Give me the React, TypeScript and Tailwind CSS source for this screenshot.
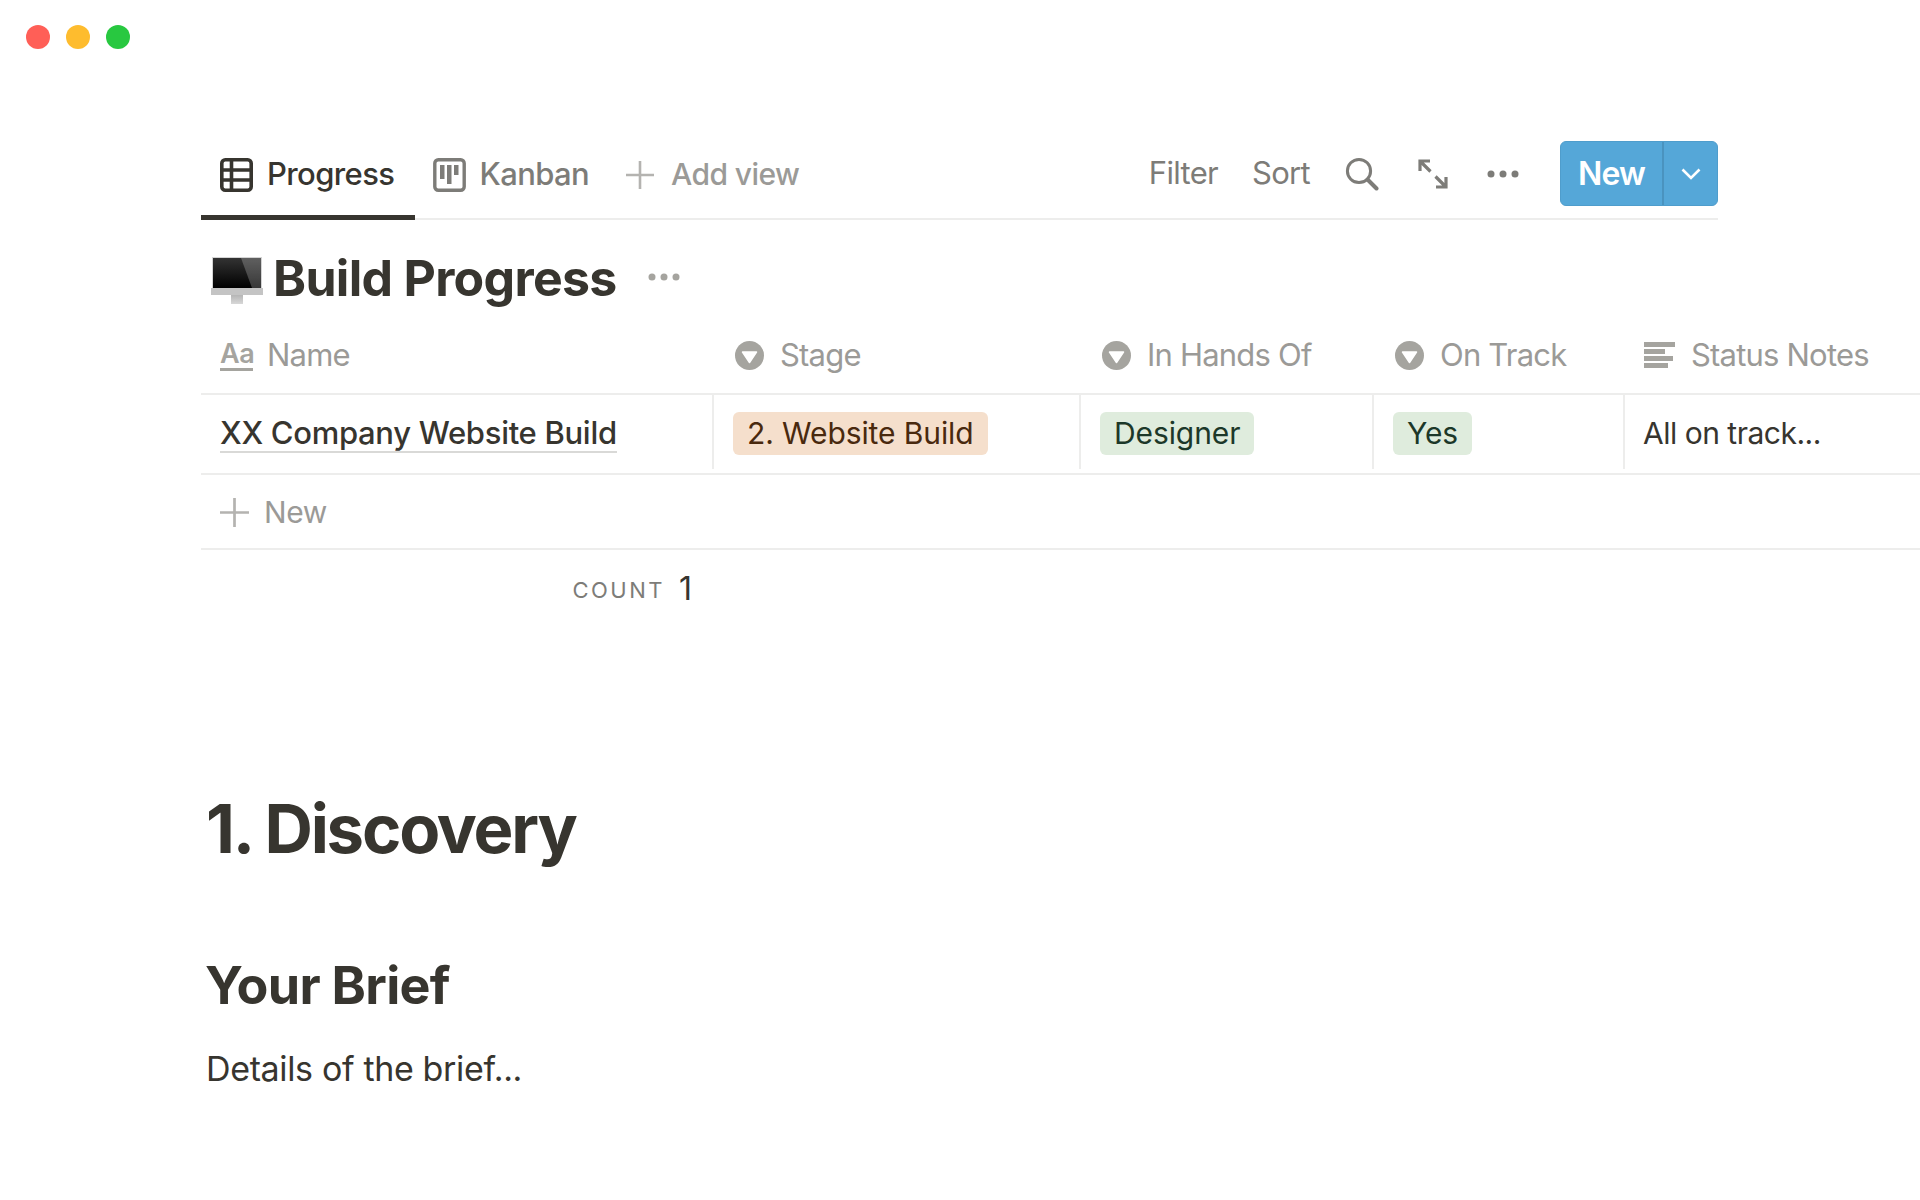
const font = "font-['Inter','Liberation_Sans',sans-serif]"

function TableIcon() {
    return <svg width="33" height="34" viewBox="0 0 33 34" fill="none" stroke="#37352f" strokeWidth="3.6">
        <rect x="1.8" y="1.8" width="29.4" height="30.4" rx="3.5"/>
        <path d="M1.8 12H31.2M1.8 22H31.2M11.5 2V32"/>
    </svg>
}

function KanbanIcon() {
    return <svg width="33" height="34" viewBox="0 0 33 34" fill="none">
        <rect x="1.8" y="1.8" width="29.4" height="30.4" rx="3.5" stroke="#7d7c78" strokeWidth="3.4"/>
        <rect x="7" y="7" width="4.5" height="14" fill="#7d7c78"/>
        <rect x="14" y="7" width="4.5" height="19" fill="#7d7c78"/>
        <rect x="21" y="7" width="4.5" height="10" fill="#7d7c78"/>
    </svg>
}

function Plus({size, color}: {size: number, color: string}) {
    return <svg width={size} height={size} viewBox="0 0 28 28" stroke={color} strokeWidth="2.6" fill="none">
        <path d="M14 0V28M0 14H28"/>
    </svg>
}

function Dots({color}: {color: string}) {
    return <svg width="32" height="8" viewBox="0 0 32 8" fill={color}>
        <circle cx="4" cy="4" r="3.5"/>
        <circle cx="16" cy="4" r="3.5"/>
        <circle cx="28" cy="4" r="3.5"/>
    </svg>
}

function SearchIcon() {
    return <svg width="34" height="34" viewBox="0 0 34 34" fill="none" stroke="#7d7c78" strokeLinecap="round">
        <circle cx="14" cy="14" r="11.6" strokeWidth="3"/>
        <path d="M22.5 22.5L31.5 31.5" strokeWidth="4"/>
    </svg>
}

function ExpandIcon() {
    return <svg width="30" height="30" viewBox="0 0 30 30" fill="none" stroke="#7d7c78" strokeWidth="3.2">
        <path d="M2 12V2H12M2 2L12.5 12.5"/>
        <path d="M28 18V28H18M28 28L17.5 17.5"/>
    </svg>
}

function SelectIcon() {
    return <svg width="29" height="29" viewBox="0 0 29 29" className="shrink-0">
        <circle cx="14.5" cy="14.5" r="14.5" fill="#a5a49f"/>
        <path d="M7.5 11H21.5L14.5 21.5Z" fill="#fff" stroke="#fff" strokeWidth="1.5" strokeLinejoin="round"/>
    </svg>
}

function NotesIcon() {
    return <div className="flex w-[31px] shrink-0 flex-col gap-[2px]">
        <div className="h-[5px] w-[31px] bg-[#a5a49f]"/>
        <div className="h-[5px] w-[21px] bg-[#a5a49f]"/>
        <div className="h-[5px] w-[29px] bg-[#a5a49f]"/>
        <div className="h-[5px] w-[24px] bg-[#a5a49f]"/>
    </div>
}

function MonitorIcon() {
    return <svg width="52" height="48" viewBox="0 0 52 48" className="mt-[5px] shrink-0">
        <defs>
            <linearGradient id="screen" x1="0" y1="0" x2="0" y2="1">
                <stop offset="0" stopColor="#333"/>
                <stop offset="1" stopColor="#000"/>
            </linearGradient>
            <linearGradient id="stand" x1="0" y1="0" x2="0" y2="1">
                <stop offset="0" stopColor="#b5b5b5"/>
                <stop offset="1" stopColor="#d8d8d8"/>
            </linearGradient>
        </defs>
        <rect x="1" y="0" width="50" height="31" fill="#d4d4d4"/>
        <rect x="2" y="1" width="48" height="30" fill="url(#screen)"/>
        <path d="M30 1H50V31H41Z" fill="#fff" opacity="0.22"/>
        <rect x="0" y="31" width="52" height="7" fill="#c4c4c4"/>
        <rect x="20" y="38" width="12" height="9" fill="url(#stand)"/>
    </svg>
}

function Pill({label, bg, color}: {label: string, bg: string, color: string}) {
    return <span className={`flex h-[43px] items-center rounded-[6px] px-[14px] text-[30px] tracking-[-0.1px] ${bg} ${color}`}>{label}</span>
}

function HeaderCell({icon, label, inset}: {icon: React.ReactNode, label: string, inset: string}) {
    return <div className={`flex items-center ${inset}`}>
        {icon}
        <span className="text-[31px] tracking-[-0.8px] text-[#9b9a97]">{label}</span>
    </div>
}

export default function App() {
    return <div className={`h-[1200px] w-[1920px] overflow-hidden bg-white text-[#37352f] ${font}`}>
        <div className="flex h-[74px] items-center gap-4 pl-[26px]">
            <div className="size-6 rounded-full bg-[#ff5f57]"/>
            <div className="size-6 rounded-full bg-[#febc2e]"/>
            <div className="size-6 rounded-full bg-[#28c840]"/>
        </div>

        <div className="pl-[201px]">
            <div className="mt-[66px] flex h-[80px] w-[1517px] border-b-2 border-[#ededec]">
                <div className="flex h-[80px] items-center gap-[14px] border-b-[5px] border-[#37352f] pb-[7px] pl-[19px] pr-[21px] pt-px">
                    <TableIcon/>
                    <span className="text-[31px] font-medium tracking-[-0.6px]">Progress</span>
                </div>
                <div className="ml-[18px] flex h-[68px] items-center gap-[13px] pt-px text-[#7d7c78]">
                    <KanbanIcon/>
                    <span className="text-[31px] font-medium tracking-[-0.6px]">Kanban</span>
                </div>
                <div className="ml-[37px] flex h-[68px] items-center gap-[17px] pt-px text-[#9b9a97]">
                    <Plus size={28} color="#b4b3b0"/>
                    <span className="text-[30px] font-medium tracking-[-0.6px]">Add view</span>
                </div>

                <div className="ml-auto flex h-[66px] items-center pt-px text-[#7d7c78]">
                    <span className="text-[31px] tracking-[-0.7px]">Filter</span>
                    <span className="ml-[34px] text-[31px] tracking-[-0.7px]">Sort</span>
                    <div className="ml-[35px]"><SearchIcon/></div>
                    <div className="ml-[39px]"><ExpandIcon/></div>
                    <div className="ml-[39px]"><Dots color="#7d7c78"/></div>
                    <div className="ml-[41px] flex h-[65px] w-[158px] rounded-[6px] border border-[#4f9dcc] bg-[#55a7d8] text-white">
                        <div className="flex w-[103px] items-center justify-center border-r-2 border-[#4a93bf] text-[32px] font-semibold tracking-[-0.9px]">New</div>
                        <div className="flex flex-1 items-center justify-center">
                            <svg width="20" height="12" viewBox="0 0 20 12" fill="none" stroke="#fff" strokeWidth="2.6">
                                <path d="M1.5 1.5L10 10L18.5 1.5"/>
                            </svg>
                        </div>
                    </div>
                </div>
            </div>

            <div className="flex h-[97px] items-center pl-[10px] pt-[19px]">
                <MonitorIcon/>
                <h2 className="ml-[10px] text-[50px] font-bold tracking-[-0.7px]">Build Progress</h2>
                <div className="ml-[31px] -translate-y-px"><Dots color="#a5a49f"/></div>
            </div>

            <div className="grid h-[78px] grid-cols-[513px_367px_293px_251px_1fr] border-b-2 border-[#ededec]">
                <HeaderCell inset="pl-[19px] gap-[14px]" label="Name" icon={
                    <span className="w-[33px] border-b-[3px] border-[#a5a49f] text-center text-[27px] font-semibold leading-[28px] tracking-[-0.5px] text-[#a5a49f]">Aa</span>
                }/>
                <HeaderCell inset="pl-[21px] gap-[16px]" label="Stage" icon={<SelectIcon/>}/>
                <HeaderCell inset="pl-[21px] gap-[16px]" label="In Hands Of" icon={<SelectIcon/>}/>
                <HeaderCell inset="pl-[21px] gap-[16px]" label="On Track" icon={<SelectIcon/>}/>
                <HeaderCell inset="pl-[19px] gap-[16px]" label="Status Notes" icon={<NotesIcon/>}/>
            </div>

            <div className="grid h-[80px] grid-cols-[513px_367px_293px_251px_1fr] border-b-2 border-[#ededec]">
                <div className="flex h-[74px] items-center border-r-2 border-[#ededec] pl-[19px] pt-[2px]">
                    <span className="border-b-2 border-[#d9d9d7] text-[31px] font-medium leading-[37px] tracking-[-0.3px]">XX Company Website Build</span>
                </div>
                <div className="flex h-[74px] items-center border-r-2 border-[#ededec] pl-[19px] pt-[2px]">
                    <Pill label="2. Website Build" bg="bg-[#f5dfcc]" color="text-[#49290e]"/>
                </div>
                <div className="flex h-[74px] items-center border-r-2 border-[#ededec] pl-[19px] pt-[2px]">
                    <Pill label="Designer" bg="bg-[#dfecdd]" color="text-[#1c3829]"/>
                </div>
                <div className="flex h-[74px] items-center border-r-2 border-[#ededec] pl-[19px] pt-[2px]">
                    <Pill label="Yes" bg="bg-[#dfecdd]" color="text-[#1c3829]"/>
                </div>
                <div className="flex h-[74px] items-center pl-[18px] pt-[2px]">
                    <span className="text-[30px] tracking-[-0.5px]">All on track...</span>
                </div>
            </div>

            <div className="flex h-[75px] items-center gap-[15px] border-b-2 border-[#ededec] pl-[19px] pt-px text-[#9b9a97]">
                <Plus size={29} color="#b4b3b0"/>
                <span className="text-[30px] tracking-[-0.4px]">New</span>
            </div>

            <div className="flex h-[78px] w-[491px] items-center justify-end gap-[14px]">
                <span className="pt-[3px] text-[22px] tracking-[2.5px] text-[#7d7c78]">COUNT</span>
                <span className="text-[32px]">1</span>
            </div>

            <h1 className="mt-[159px] pl-[5px] text-[67px] font-bold leading-[84px] tracking-[-2.2px]">1. Discovery</h1>
            <h3 className="mt-[83px] pl-[4px] text-[52px] font-bold leading-[64px] tracking-[-0.7px]">Your Brief</h3>
            <p className="mt-[27px] pl-[5px] text-[34px] leading-[48px] tracking-[-0.35px]">Details of the brief...</p>
        </div>
    </div>
}
